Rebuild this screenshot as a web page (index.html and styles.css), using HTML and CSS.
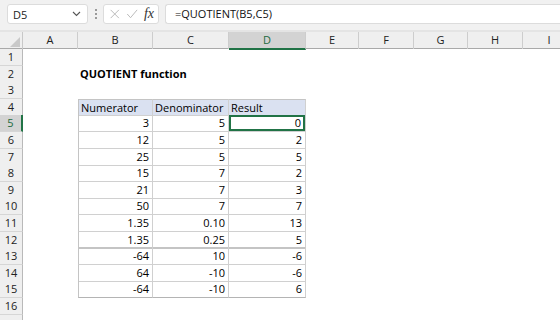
FILE: index.html
```html
<!DOCTYPE html>
<html lang="en">
<head>
    <meta charset="UTF-8">
    <title>QUOTIENT function</title>
    <link rel="stylesheet" href="styles.css">
</head>
<body>

    <!-- Formula bar -->
    <div class="toolbar">
        <div class="namebox">
            <span>D5</span>
            <svg class="chevron" width="9" height="6" viewBox="0 0 9 6"><polyline points="1,1 4.5,4.5 8,1" fill="none" stroke="#555" stroke-width="1.1"/></svg>
        </div>
        <div class="dots"><i></i><i></i><i></i></div>
        <div class="fxbox">
            <svg width="14" height="14" viewBox="0 0 14 14"><path d="M2 2 L12 12 M12 2 L2 12" stroke="#b4b4b4" stroke-width="1.1" fill="none"/></svg>
            <svg width="15" height="14" viewBox="0 0 15 14"><polyline points="1.5,7 5.5,11.5 13.5,2" stroke="#b4b4b4" stroke-width="1.1" fill="none"/></svg>
            <span class="fx">fx</span>
        </div>
        <div class="formula">=QUOTIENT(B5,C5)</div>
    </div>

    <div class="sheet">
        <div class="row colhead">
            <div class="corner"><svg width="10" height="10" viewBox="0 0 10 10"><polygon points="10,0 10,10 0,10" fill="#c9c9c9"/></svg></div>
            <div class="ch">A</div>
            <div class="ch">B</div>
            <div class="ch">C</div>
            <div class="ch sel">D</div>
            <div class="ch">E</div>
            <div class="ch">F</div>
            <div class="ch">G</div>
            <div class="ch">H</div>
            <div class="ch">I</div>
        </div>

        <div class="row"><div class="rh">1</div></div>
        <div class="row"><div class="rh">2</div><div class="title">QUOTIENT function</div></div>
        <div class="row"><div class="rh">3</div></div>

        <!-- Table -->
        <div class="row"><div class="rh">4</div><div class="tc th first top">Numerator</div><div class="tc th top">Denominator</div><div class="tc th top">Result</div></div>
        <div class="row"><div class="rh sel">5</div><div class="tc first">3</div><div class="tc">5</div><div class="tc active">0</div></div>
        <div class="row"><div class="rh">6</div><div class="tc first">12</div><div class="tc">5</div><div class="tc">2</div></div>
        <div class="row"><div class="rh">7</div><div class="tc first">25</div><div class="tc">5</div><div class="tc">5</div></div>
        <div class="row"><div class="rh">8</div><div class="tc first">15</div><div class="tc">7</div><div class="tc">2</div></div>
        <div class="row"><div class="rh">9</div><div class="tc first">21</div><div class="tc">7</div><div class="tc">3</div></div>
        <div class="row"><div class="rh">10</div><div class="tc first">50</div><div class="tc">7</div><div class="tc">7</div></div>
        <div class="row"><div class="rh">11</div><div class="tc first">1.35</div><div class="tc">0.10</div><div class="tc">13</div></div>
        <div class="row"><div class="rh">12</div><div class="tc first split">1.35</div><div class="tc split">0.25</div><div class="tc split">5</div></div>
        <div class="row"><div class="rh">13</div><div class="tc first">-64</div><div class="tc">10</div><div class="tc">-6</div></div>
        <div class="row"><div class="rh">14</div><div class="tc first">64</div><div class="tc">-10</div><div class="tc">-6</div></div>
        <div class="row"><div class="rh">15</div><div class="tc first last">-64</div><div class="tc last">-10</div><div class="tc last">6</div></div>

        <div class="row"><div class="rh">16</div></div>
        <div class="row"><div class="rh"></div></div>
    </div>

</body>
</html>
```

FILE: styles.css
```css
* {
    box-sizing: border-box;
}

body {
    margin: 0;
    padding: 0;
    font-family: "Open Sans", "Noto Sans", sans-serif;
    background-color: white;
    overflow: hidden;
    color: #000;
}

/* Formula bar */
.toolbar {
    display: flex;
    align-items: center;
    height: 32px;
    padding: 0 0 2px 7px;
    background-color: #f1f1f1;
    border-bottom: 2px solid #e4e4e4;
}

.namebox {
    display: flex;
    align-items: center;
    justify-content: space-between;
    width: 81px;
    height: 20px;
    padding: 0 6px 0 5px;
    background-color: white;
    border: 1px solid #dcdcdc;
    border-radius: 3px;
    font-size: 11px;
    color: #222;
}

.dots {
    display: flex;
    flex-direction: column;
    gap: 2px;
    margin: 0 6px 0 7px;
}

.dots i {
    display: block;
    width: 2px;
    height: 2px;
    background-color: #9a9a9a;
}

.fxbox {
    display: flex;
    align-items: center;
    gap: 5px;
    width: 56px;
    height: 20px;
    padding: 0 4px 0 5px;
    background-color: white;
    border: 1px solid #dcdcdc;
    border-radius: 3px;
}

.fx {
    font-family: "Liberation Serif", serif;
    font-style: italic;
    font-size: 14px;
    color: #333;
    margin-left: 1px;
}

.formula {
    flex: 1;
    height: 20px;
    margin-left: 6px;
    padding-left: 9px;
    background-color: white;
    border: 1px solid #dcdcdc;
    border-right: none;
    border-radius: 3px 0 0 3px;
    font-size: 11px;
    line-height: 18px;
    color: #111;
}

/* Sheet grid */
.row {
    display: grid;
    grid-template-columns: 23px 55px 75px 76px 77px 53px 55px 54px 55px 53px;
    height: 16.6px;
    font-size: 11px;
}

.colhead {
    height: 17px;
    background-color: #efefef;
    border-bottom: 1px solid #a9a9a9;
}

.corner {
    display: flex;
    align-items: flex-end;
    justify-content: flex-end;
    padding: 0 2px 2px 0;
    border-right: 1px solid #c8c8c8;
}

.ch {
    text-align: center;
    line-height: 16px;
    font-size: 11px;
    color: #222;
    border-right: 1px solid #cdcdcd;
}

.ch.sel {
    background-color: #d3d3d3;
    color: #1d6b40;
    border-bottom: 2px solid #217346;
    margin-bottom: -1px;
}

.rh {
    text-align: center;
    line-height: 16px;
    font-size: 11px;
    color: #222;
    background-color: #efefef;
    border-right: 1px solid #b9b9b9;
    border-bottom: 1px solid #d6d6d6;
}

.rh.sel {
    background-color: #d3d3d3;
    color: #1d6b40;
    border-right: 2px solid #217346;
}

.title {
    grid-column: 3 / span 3;
    padding-left: 2px;
    font-weight: bold;
    line-height: 16px;
}

/* Table cells */
.tc {
    padding-right: 3px;
    text-align: right;
    line-height: 15px;
    border-right: 1px solid #d0d0d0;
    border-bottom: 1px solid #d0d0d0;
}

.tc.first {
    grid-column: 3;
    border-left: 1px solid #c4c4c4;
}

.tc.top {
    border-top: 1px solid #c4c4c4;
}

.tc.th {
    padding-left: 2px;
    text-align: left;
    background-color: #dae1f1;
}

.tc.split {
    border-bottom: 2px solid #c4c4c4;
}

.tc.last {
    border-bottom: 1px solid #b4b4b4;
}

.tc.active {
    box-shadow: inset 0 0 0 2px #217346;
    padding-right: 4px;
}
```
